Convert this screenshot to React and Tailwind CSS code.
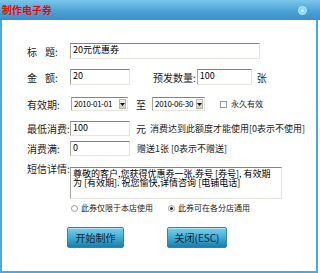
import React from "react";

const inset =
  "border border-t-[#85847a] border-l-[#a8a79c] border-r-[#e6e5dc] border-b-[#e6e5dc] bg-white";

const Label = ({ children }) => (
  <div className="w-[43px] shrink-0 whitespace-nowrap">{children}</div>
);

const Field = ({ w, value }) => (
  <div className={`${inset} ${w} h-full shrink-0 pl-[2px] leading-[12px] text-[9px] text-black whitespace-nowrap overflow-hidden`}>
    {value}
  </div>
);

const Select = ({ w, value }) => (
  <div className={`${inset} ${w} h-full shrink-0 flex items-stretch`}>
    <div className="flex-1 pl-[2px] text-[8px] leading-[12px] text-black tracking-[-0.3px] whitespace-nowrap overflow-hidden">
      {value}
    </div>
    <div className="w-[7px] my-[1px] mr-[1px] bg-gradient-to-b from-[#f2f2ea] to-[#cfcdc2] border border-[#b8b6aa] flex items-center justify-center">
      <svg width="5" height="3" viewBox="0 0 5 3">
        <path d="M0 0h5L2.5 3z" fill="#111" />
      </svg>
    </div>
  </div>
);

const Radio = ({ checked }) => (
  <div className="w-[7px] h-[7px] rounded-full border border-[#9a9a9a] bg-white flex items-center justify-center">
    {checked && <div className="w-[3px] h-[3px] rounded-full bg-[#222]" />}
  </div>
);

const Btn = ({ w, children }) => (
  <button
    className={`${w} h-[21px] rounded-[2px] border border-[#2a86ad] bg-gradient-to-b from-[#79d0ec] via-[#3eaed6] to-[#1a7ea8] text-[10px] text-[#0c2236] shadow-[inset_0_1px_0_#b5e6f6]`}
  >
    {children}
  </button>
);

export default function App() {
  return (
    <div className="w-[320px] h-[273px] overflow-hidden bg-white font-['Noto_Sans_CJK_SC',sans-serif] text-[10px] text-[#222] flex flex-col">
      {/* title bar */}
      <div className="h-[20px] shrink-0 bg-gradient-to-b from-[#7cc6ec] via-[#4fa6d8] to-[#3a8ec4] flex items-center justify-between pl-[2px] pr-[13px]">
        <span className="text-[10px] font-bold text-[#ff0000] leading-none">制作电子券</span>
        <div className="w-[9px] h-[9px] rounded-full bg-[#8fd6f5] border border-[#b8e8fb] flex items-center justify-center">
          <div className="w-[3px] h-[3px] rounded-full bg-[#c8efff]" />
        </div>
      </div>

      {/* body */}
      <div className="flex-1 flex flex-col border-l-2 border-r-2 border-b-2 border-[#4aa9df] mr-[2px] pl-[25px]">
        <div className="mt-[23px] h-[16px] flex items-center">
          <Label>
            标<span className="ml-[8px]">题</span>:
          </Label>
          <Field w="w-[190px]" value="20元优惠券" />
        </div>

        <div className="mt-[10px] h-[16px] flex items-center whitespace-nowrap">
          <Label>
            金<span className="ml-[8px]">额</span>:
          </Label>
          <Field w="w-[60px]" value="20" />
          <span className="ml-[23px] shrink-0">预发数量:</span>
          <div className="ml-[1px] h-full">
            <Field w="w-[55px]" value="100" />
          </div>
          <span className="ml-[5px]">张</span>
        </div>

        <div className="mt-[12px] h-[14px] flex items-center whitespace-nowrap">
          <Label>有效期:</Label>
          <div className="ml-[1px] h-full flex items-center">
            <Select w="w-[57px]" value="2010-01-01" />
          </div>
          <span className="ml-[8px]">至</span>
          <div className="ml-[6px] h-full flex items-center">
            <Select w="w-[53px]" value="2010-06-30" />
          </div>
          <div className="ml-[15px] w-[7px] h-[7px] shrink-0 border border-[#9a9a9a] bg-white" />
          <span className="ml-[4px] text-[8px]">永久有效</span>
        </div>

        <div className="mt-[10px] h-[15px] flex items-center">
          <Label>最低消费:</Label>
          <Field w="w-[60px]" value="100" />
          <span className="ml-[6px]">元</span>
          <span className="ml-[4px] whitespace-nowrap text-[9px]">消费达到此额度才能使用[0表示不使用]</span>
        </div>

        <div className="mt-[5px] h-[15px] flex items-center">
          <Label>消费满:</Label>
          <Field w="w-[60px]" value="0" />
          <span className="ml-[7px] whitespace-nowrap text-[9px]">赠送1张 [0表示不赠送]</span>
        </div>

        <div className="mt-[11px] flex items-start">
          <div className="w-[43px] -mt-[6px]">短信详情:</div>
          <div className={`${inset} w-[212px] h-[32px] px-[2px] pt-[1px] text-[9px] leading-[9px] text-black`}>
            尊敬的客户,您获得优惠券一张,券号 [券号], 有效期为 [有效期]. 祝您愉快,详情咨询 [电铺电话]
          </div>
        </div>

        <div className="mt-[4px] h-[10px] flex items-center whitespace-nowrap text-[8px]">
          <div className="ml-[44px]">
            <Radio />
          </div>
          <span className="ml-[3px] w-[87px]">此券仅限于本店使用</span>
          <div>
            <Radio checked />
          </div>
          <span className="ml-[3px]">此券可在各分店通用</span>
        </div>

        <div className="mt-[14px] flex items-center">
          <div className="ml-[40px]">
            <Btn w="w-[57px]">开始制作</Btn>
          </div>
          <div className="ml-[43px]">
            <Btn w="w-[60px]">关闭(ESC)</Btn>
          </div>
        </div>
      </div>
    </div>
  );
}
